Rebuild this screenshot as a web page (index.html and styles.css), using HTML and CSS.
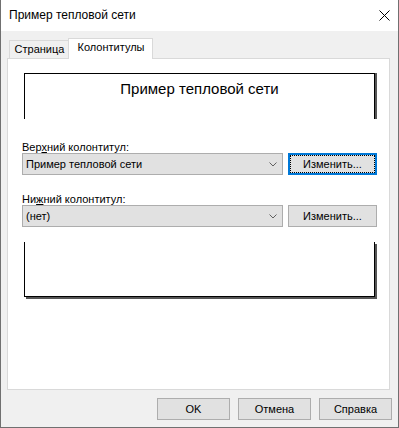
FILE: index.html
```html
<!DOCTYPE html>
<html lang="ru">
<head>
<meta charset="utf-8">
<title>Пример тепловой сети</title>
<link rel="stylesheet" href="styles.css">
</head>
<body>
<div class="window">
  <div class="titlebar">
    <span class="title">Пример тепловой сети</span>
    <svg class="close" width="11" height="11" viewBox="0 0 11 11"><path d="M0.5 0.5 L10.5 10.5 M10.5 0.5 L0.5 10.5" stroke="#000" stroke-width="1" fill="none"/></svg>
  </div>
  <div class="client">
    <div class="tabs">
      <div class="tab">Страница</div>
      <div class="tab active">Колонтитулы</div>
    </div>
    <div class="panel">
      <div class="preview-top">Пример тепловой сети</div>
      <div class="fields">
        <div class="label">Вер<u>х</u>ний колонтитул:</div>
        <div class="row">
          <div class="combo"><span class="combo-text">Пример тепловой сети</span><svg class="chev" width="8" height="5" viewBox="0 0 8 5"><path d="M0.5 0.5 L4 4 L7.5 0.5" stroke="#606060" stroke-width="1" fill="none"/></svg></div>
          <div class="btn btn-change focused">Изменить...</div>
        </div>
        <div class="label second">Ни<u>ж</u>ний колонтитул:</div>
        <div class="row">
          <div class="combo"><span class="combo-text">(нет)</span><svg class="chev" width="8" height="5" viewBox="0 0 8 5"><path d="M0.5 0.5 L4 4 L7.5 0.5" stroke="#606060" stroke-width="1" fill="none"/></svg></div>
          <div class="btn btn-change">Изменить...</div>
        </div>
      </div>
      <div class="preview-bottom"></div>
    </div>
    <div class="buttons">
      <div class="btn btn-dlg">OK</div>
      <div class="btn btn-dlg">Отмена</div>
      <div class="btn btn-dlg">Справка</div>
    </div>
  </div>
</div>
</body>
</html>
```
FILE: styles.css
```css
* { box-sizing: border-box; }
html, body { margin: 0; padding: 0; }
body {
  width: 399px;
  height: 428px;
  font-family: "Liberation Sans", Arial, sans-serif;
  font-size: 11px;
  color: #000;
  background: #fff;
}
.window {
  width: 399px;
  height: 428px;
  border: 1px solid #707070;
  border-top: none;
  display: flex;
  flex-direction: column;
  background: #f0f0f0;
}
.titlebar {
  height: 31px;
  flex: none;
  background: #fff;
  display: flex;
  align-items: center;
  justify-content: space-between;
  padding-left: 8px;
  padding-right: 8px;
}
.title {
  font-size: 12px;
  line-height: 31px;
}
.close { display: block; margin-top: -1px; }
.client {
  flex: 1;
  display: flex;
  flex-direction: column;
}
.tabs {
  display: flex;
  align-items: flex-end;
  height: 20px;
  margin-top: 7px;
  margin-left: 8px;
}
.tab {
  height: 18px;
  width: 59px;
  border: 1px solid #d9d9d9;
  border-bottom: none;
  border-right: none;
  background: #f0f0f0;
  text-align: center;
  line-height: 17px;
  padding-left: 1px;
}
.tab.active {
  width: 85px;
  height: 21px;
  margin-bottom: -1px;
  border-right: 1px solid #d9d9d9;
  background: #fff;
  position: relative;
  z-index: 1;
  line-height: 17px;
  padding-top: 0;
}
.panel {
  width: 383px;
  height: 332px;
  margin-left: 6px;
  border: 1px solid #d9d9d9;
  background: #fff;
  display: flex;
  flex-direction: column;
}
.preview-top {
  margin-top: 14px;
  margin-left: 16px;
  width: 351px;
  height: 46px;
  flex: none;
  border: 1px solid #000;
  border-bottom: none;
  box-shadow: 2px 0 0 #555;
  text-align: center;
  font-size: 15px;
  line-height: 18px;
  padding-top: 6px;
}
.fields {
  height: 123px;
  flex: none;
  padding: 22px 0 0 14px;
}
.label {
  height: 12px;
  line-height: 12px;
}
.label.second { margin-top: 18px; }
.row {
  display: flex;
  gap: 5px;
}
.combo {
  width: 261px;
  height: 22px;
  border: 1px solid #adadad;
  background: #e1e1e1;
  display: flex;
  align-items: center;
  justify-content: space-between;
  padding-left: 3px;
  padding-right: 5px;
}
.combo-text { line-height: 20px; }
.chev { display: block; margin-top: 1px; }
.btn {
  height: 22px;
  border: 1px solid #adadad;
  background: #e1e1e1;
  display: flex;
  align-items: center;
  justify-content: center;
  line-height: 20px;
}
.btn-change { width: 89px; }
.btn.focused {
  border: 2px solid #0078d7;
  outline: 1px dotted #000;
  outline-offset: -3px;
}
.preview-bottom {
  margin-left: 16px;
  width: 351px;
  height: 55px;
  flex: none;
  border: 1px solid #000;
  border-top: none;
  box-shadow: 2px 2px 0 #555;
}
.buttons {
  display: flex;
  justify-content: flex-end;
  gap: 8px;
  margin-top: 8px;
  padding-right: 6px;
}
.btn-dlg { width: 73px; }
```
